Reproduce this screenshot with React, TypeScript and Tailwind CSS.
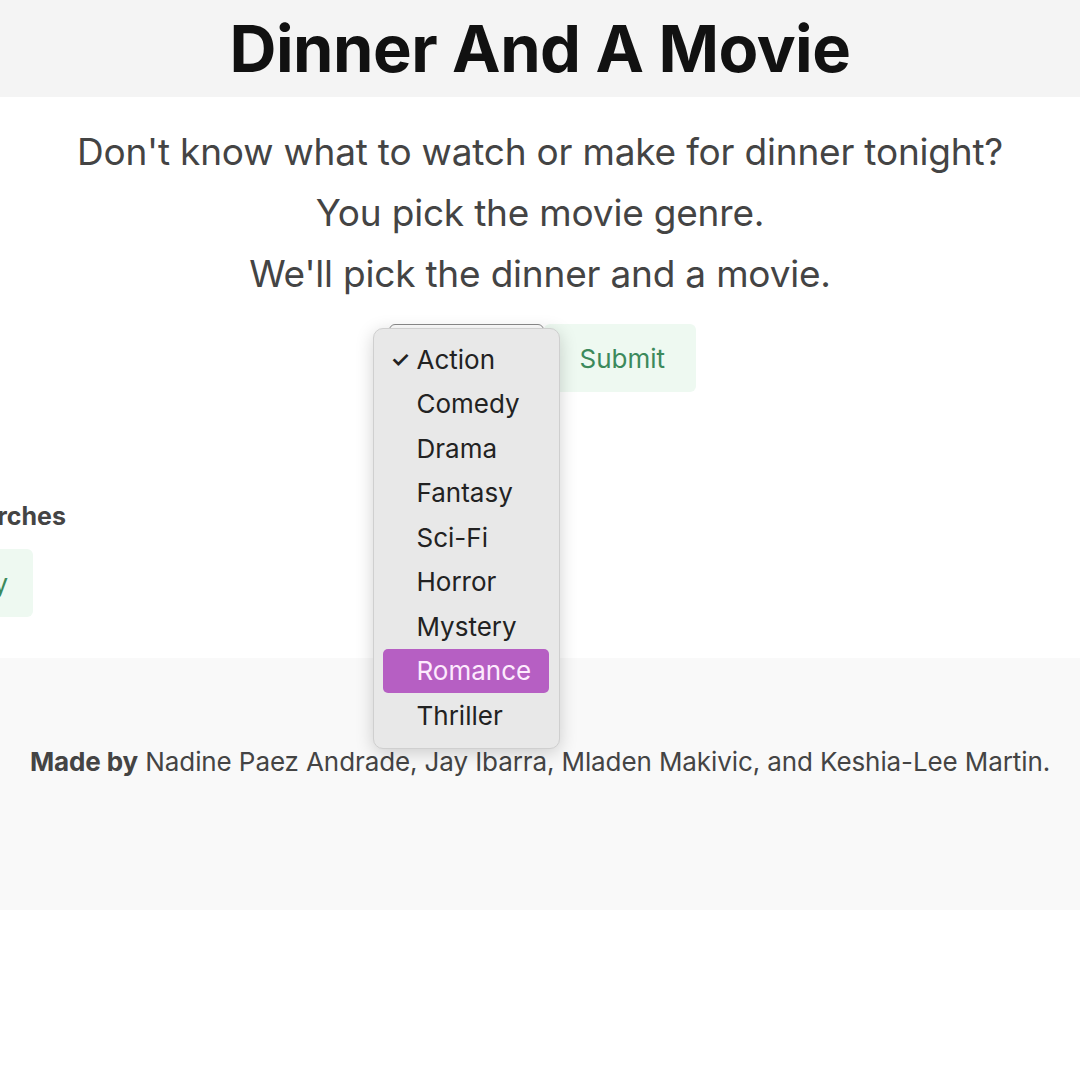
import { useState } from "react";

const GENRES = ["Action", "Comedy", "Drama", "Fantasy", "Sci-Fi", "Horror", "Mystery", "Romance", "Thriller"];

export default function App() {
  const [selected] = useState("Action");
  const [hover] = useState("Romance");

  return (
    <div className="min-h-screen bg-white font-['Inter','Liberation_Sans',sans-serif]">
      <header className="h-[97px] bg-[#f4f4f4] flex items-center justify-center">
        <h1 className="text-[65px] font-bold text-[#111] tracking-[-0.5px] leading-none">Dinner And A Movie</h1>
      </header>

      <main className="h-[561px] pt-[24px]">
        <div className="text-center text-[37px] leading-[61px] text-[#444] tracking-[-0.2px]">
          <p>Don't know what to watch or make for dinner tonight?</p>
          <p>You pick the movie genre.</p>
          <p>We'll pick the dinner and a movie.</p>
        </div>

        <form className="mt-[20px] flex justify-center pl-[4px]">
          <div className="relative">
            <div className="w-[155px] h-[68px] rounded-md border border-[#8a8a8a] bg-white" />
            {/* open select list */}
            <ul className="absolute left-[-16px] top-[4px] w-[187px] pt-[8px] pb-[10px] pl-[9px] pr-[10px] rounded-[10px] bg-[#e8e8e8] border border-[#cfcfcf] shadow-[0_4px_18px_rgba(0,0,0,0.18)] z-10">
              {GENRES.map((g) => (
                <li
                  key={g}
                  className={
                    "relative h-[44.5px] flex items-center pl-[34px] rounded-[5px] text-[26px] " +
                    (g === hover ? "bg-[#b65fc3] text-[#fdebfd]" : "text-[#222]")
                  }
                >
                  {g === selected && <span className="absolute left-[8px] text-[22px] font-semibold">✓</span>}
                  {g}
                </li>
              ))}
            </ul>
          </div>
          <button type="button" className="h-[68px] w-[152px] rounded-md bg-[#eef9f1] text-[#3c8a5c] text-[26px] pl-[36px] text-left">
            Submit
          </button>
        </form>

        <div className="mt-[109px] w-[66px] overflow-hidden flex justify-end">
          <h2 className="whitespace-nowrap text-[25px] font-bold text-[#444] leading-[30px]">Recent Searches</h2>
        </div>
        <div className="mt-[18px] w-[33px] overflow-hidden flex justify-end">
          <button type="button" className="shrink-0 whitespace-nowrap h-[68px] rounded-md bg-[#eef9f1] text-[#3c8a5c] text-[26px] pl-[36px] pr-[25px]">
            Mystery
          </button>
        </div>
      </main>

      <footer className="h-[252px] bg-[#f9f9f9] pt-[89px]">
        <p className="text-center text-[26px] leading-[30px] text-[#444] tracking-[-0.1px]">
          <span className="font-bold">Made by</span> Nadine Paez Andrade, Jay Ibarra, Mladen Makivic, and Keshia-Lee Martin.
        </p>
      </footer>
    </div>
  );
}
